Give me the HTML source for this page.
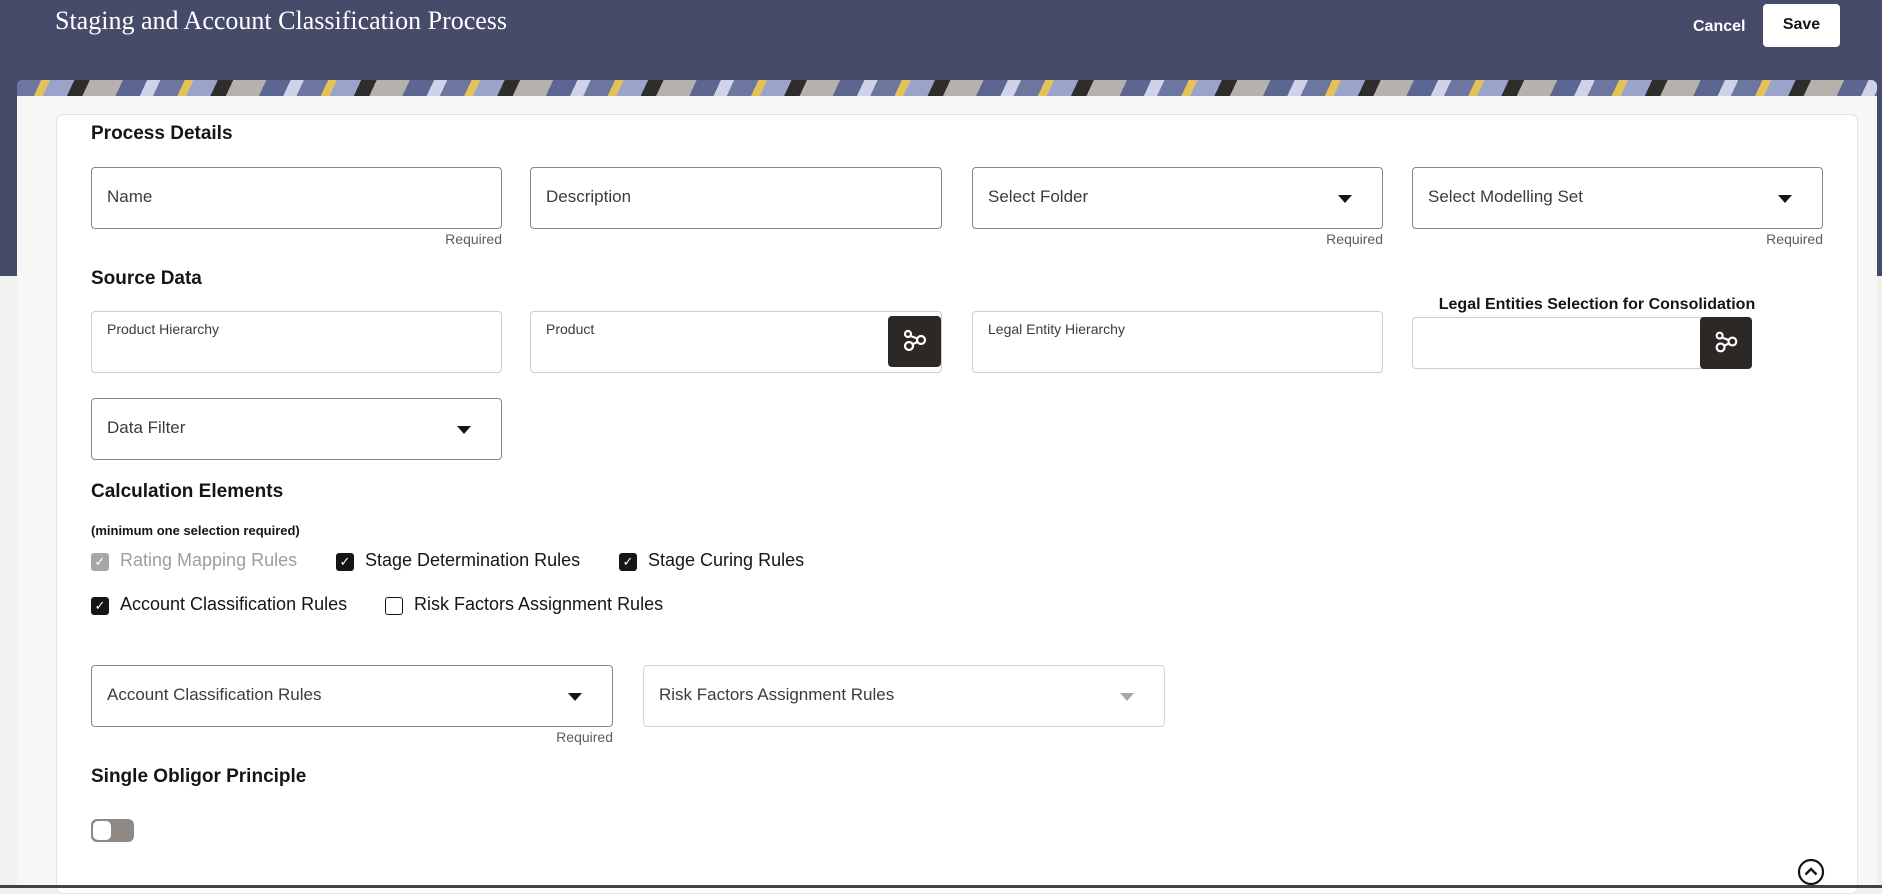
<!DOCTYPE html>
<html><head><meta charset="utf-8"><style>
*{box-sizing:border-box;margin:0;padding:0}
body{width:1882px;height:888px;overflow:hidden;background:#f1f1f0;font-family:"Liberation Sans",sans-serif;position:relative;color:#161513}
.a{position:absolute}
.hdr{left:0;top:0;width:1882px;height:276px;background:#474b6a}
.title{left:55px;top:6px;font-family:"Liberation Serif",serif;font-size:26px;color:#fff}
.cancel{left:1693px;top:18px;color:#fff;font-weight:bold;font-size:16px}
.save{left:1763px;top:4px;width:77px;height:43px;background:#fff;border-radius:4px;font-weight:bold;font-size:16px;text-align:center;line-height:41px}
.outer{left:17px;top:80px;width:1860px;height:808px;background:#f8f7f5;border-radius:6px 6px 0 0;overflow:hidden}
.band{left:0;top:0;width:1860px;height:16px;background:repeating-linear-gradient(115deg,#6d769f 0 22px,#e3c25a 22px 30px,#9aa3c9 30px 52px,#2f2d2b 52px 66px,#b5b2ad 66px 96px,#5d6690 96px 118px,#cfd3ea 118px 130px)}
.inner{left:56px;top:114px;width:1802px;height:780px;background:#fff;border:1px solid #e4e3e0;border-radius:7px}
.h{font-weight:bold;font-size:19px}
.f{border:1px solid #8a8784;border-radius:4px;background:#fff;height:62px}
.fl{font-size:17px;color:#3e3b38;position:absolute;left:15px;top:19px}
.sl{font-size:14px;color:#3e3b38;position:absolute;left:15px;top:9px}
.req{font-size:14px;color:#5f5c59;text-align:right}
.dd{position:absolute;right:30px;top:27px;width:0;height:0;border-left:7px solid transparent;border-right:7px solid transparent;border-top:8px solid #161513}
.btn{background:#2b2826;border-radius:4px;width:53px;height:51px}
.cb{width:18px;height:18px;border-radius:3px;background:#161513;color:#fff;font-size:13px;text-align:center;line-height:18px}
.cbl{font-size:18px;color:#161513}
</style></head><body>
<div class="a hdr"></div>
<div class="a title">Staging and Account Classification Process</div>
<div class="a cancel">Cancel</div>
<div class="a save">Save</div>
<div class="a outer"><div class="a band"></div></div>
<div class="a inner"></div>

<div class="a h" style="left:91px;top:123px">Process Details</div>
<div class="a f" style="left:91px;top:167px;width:411px"><span class="fl">Name</span></div>
<div class="a req" style="left:91px;top:231px;width:411px">Required</div>
<div class="a f" style="left:530px;top:167px;width:412px"><span class="fl">Description</span></div>
<div class="a f" style="left:972px;top:167px;width:411px"><span class="fl">Select Folder</span><span class="dd"></span></div>
<div class="a req" style="left:972px;top:231px;width:411px">Required</div>
<div class="a f" style="left:1412px;top:167px;width:411px"><span class="fl">Select Modelling Set</span><span class="dd"></span></div>
<div class="a req" style="left:1412px;top:231px;width:411px">Required</div>

<div class="a h" style="left:91px;top:268px">Source Data</div>
<div class="a f" style="left:91px;top:311px;width:411px;border-color:#cfcdca"><span class="sl">Product Hierarchy</span></div>
<div class="a f" style="left:530px;top:311px;width:412px;border-color:#cfcdca"><span class="sl">Product</span></div>
<div class="a btn" style="left:888px;top:316px"><svg width="53" height="51" viewBox="0 0 53 51"><g fill="none" stroke="#fff" stroke-width="2.2"><circle cx="21" cy="30" r="4"/><circle cx="33" cy="24" r="4"/><circle cx="20" cy="18" r="3"/><path d="M22.5 20l7 2.5M25 28l4.5-2"/></g></svg></div>
<div class="a f" style="left:972px;top:311px;width:411px;border-color:#cfcdca"><span class="sl">Legal Entity Hierarchy</span></div>
<div class="a" style="left:1412px;top:296px;width:370px;text-align:center;font-weight:bold;font-size:16px">Legal Entities Selection for Consolidation</div>
<div class="a f" style="left:1412px;top:317px;width:340px;height:52px;border-color:#cfcdca"></div>
<div class="a btn" style="left:1700px;top:317px;height:52px;width:52px"><svg width="52" height="52" viewBox="0 0 53 51"><g fill="none" stroke="#fff" stroke-width="2.2"><circle cx="21" cy="30" r="4"/><circle cx="33" cy="24" r="4"/><circle cx="20" cy="18" r="3"/><path d="M22.5 20l7 2.5M25 28l4.5-2"/></g></svg></div>

<div class="a f" style="left:91px;top:398px;width:411px"><span class="fl">Data Filter</span><span class="dd"></span></div>

<div class="a h" style="left:91px;top:481px">Calculation Elements</div>
<div class="a" style="left:91px;top:523px;font-size:13px;font-weight:bold">(minimum one selection required)</div>

<div class="a cb" style="left:91px;top:553px;background:#a9a7a4">✓</div>
<div class="a cbl" style="left:120px;top:550px;color:#a09d9a">Rating Mapping Rules</div>
<div class="a cb" style="left:336px;top:553px">✓</div>
<div class="a cbl" style="left:365px;top:550px">Stage Determination Rules</div>
<div class="a cb" style="left:619px;top:553px">✓</div>
<div class="a cbl" style="left:648px;top:550px">Stage Curing Rules</div>
<div class="a cb" style="left:91px;top:597px">✓</div>
<div class="a cbl" style="left:120px;top:594px">Account Classification Rules</div>
<div class="a cb" style="left:385px;top:597px;background:#fff;border:1.5px solid #161513"></div>
<div class="a cbl" style="left:414px;top:594px">Risk Factors Assignment Rules</div>

<div class="a f" style="left:91px;top:665px;width:522px"><span class="fl">Account Classification Rules</span><span class="dd"></span></div>
<div class="a req" style="left:91px;top:729px;width:522px">Required</div>
<div class="a f" style="left:643px;top:665px;width:522px;border-color:#d6d4d1"><span class="fl">Risk Factors Assignment Rules</span><span class="dd" style="border-top-color:#a9a7a4"></span></div>

<div class="a h" style="left:91px;top:766px">Single Obligor Principle</div>
<div class="a" style="left:91px;top:819px;width:43px;height:23px;border-radius:6px;background:#8f8883"><div style="position:absolute;left:2px;top:2px;width:18px;height:19px;border-radius:5px;background:#fff"></div></div>
<svg class="a" style="left:1797px;top:858px" width="28" height="28" viewBox="0 0 28 28"><circle cx="14" cy="14" r="12" fill="none" stroke="#161513" stroke-width="2.2"/><path d="M8.5 16.5L14 11l5.5 5.5" fill="none" stroke="#161513" stroke-width="2.4"/></svg>
<div class="a" style="left:0;top:885px;width:1882px;height:3px;background:#3d4447"></div>
</body></html>
